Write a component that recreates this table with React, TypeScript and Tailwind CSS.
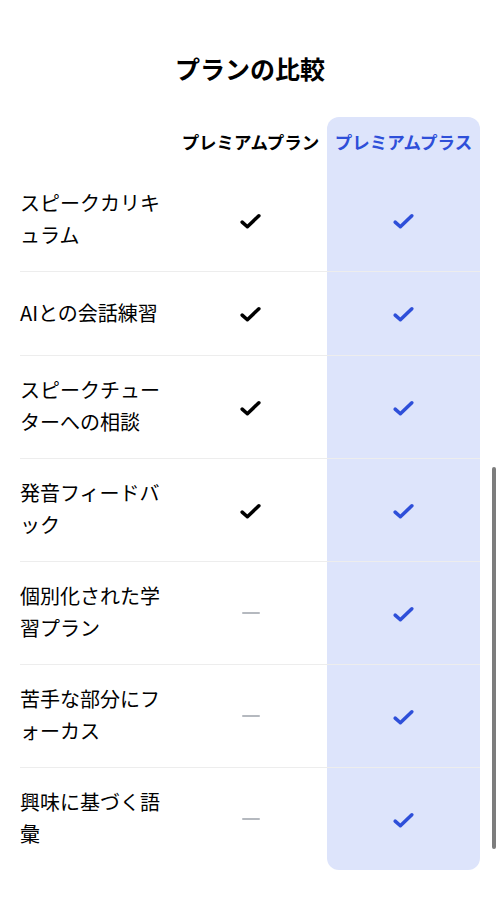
const features: { label: string; basic: boolean }[] = [
  { label: 'スピークカリキュラム', basic: true },
  { label: 'AIとの会話練習', basic: true },
  { label: 'スピークチューターへの相談', basic: true },
  { label: '発音フィードバック', basic: true },
  { label: '個別化された学習プラン', basic: false },
  { label: '苦手な部分にフォーカス', basic: false },
  { label: '興味に基づく語彙', basic: false },
];

function Check({ className }: { className: string }) {
  return (
    <svg viewBox="0 0 24 24" className={className} fill="none" aria-hidden="true">
      <path d="M4 13.5l5 4.5L20 7.5" stroke="currentColor" strokeWidth="3.4" strokeLinecap="round" strokeLinejoin="round" />
    </svg>
  );
}

export default function App() {
  return (
    <div
      className="relative min-h-[905px] bg-white text-black"
      style={{ fontFamily: '"Noto Sans CJK JP", "Noto Sans", sans-serif' }}
    >
      <h2 className="pt-[51px] text-center text-[25px] leading-[34px] font-bold">プランの比較</h2>

      <div className="mt-[32px] px-5">
        <div className="grid grid-cols-[154px_153px_153px]">
          <div />
          <div className="flex items-end justify-center pb-[15px] text-[17.5px] leading-6 font-bold whitespace-nowrap">
            プレミアムプラン
          </div>
          <div className="flex h-[52px] items-end justify-center rounded-t-xl bg-[#dde4fb] pb-[15px] text-[17.5px] leading-6 font-bold whitespace-nowrap text-[#2e4fd9]">
            プレミアムプラス
          </div>
        </div>

        {features.map((f, i) => {
          const last = i === features.length - 1;
          return (
            <div
              key={f.label}
              className={`grid min-h-[84px] grid-cols-[154px_153px_153px] ${last ? '' : 'border-b border-black/[0.07]'}`}
            >
              <div className="flex items-center pt-[18px] pb-[20px] pr-1 text-[20px] leading-[32px]">{f.label}</div>
              <div className="flex items-center justify-center">
                {f.basic ? (
                  <Check className="h-[25px] w-[25px] text-black" />
                ) : (
                  <div className="h-[2px] w-[18px] rounded bg-[#b5b9bf]" />
                )}
              </div>
              <div className={`flex items-center justify-center bg-[#dde4fb] ${last ? 'rounded-b-xl' : ''}`}>
                <Check className="h-[25px] w-[25px] text-[#2e4fd9]" />
              </div>
            </div>
          );
        })}
      </div>

      <div className="absolute top-[467px] right-[4px] h-[382px] w-[4px] rounded-full bg-[#7d7d7d]" />
    </div>
  );
}
